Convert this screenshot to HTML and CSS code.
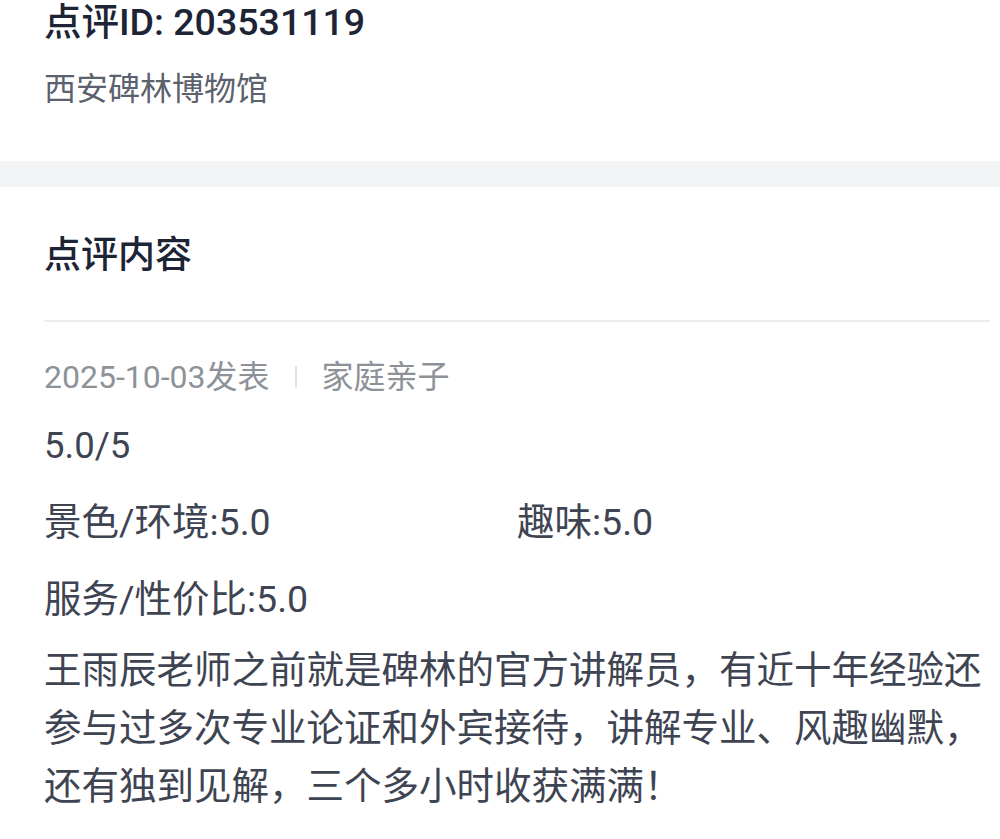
FILE: index.html
```html
<!DOCTYPE html>
<html lang="zh-CN">
<head>
<meta charset="utf-8">
<title>点评详情</title>
<link rel="stylesheet" href="styles.css">
</head>
<body>
<div class="page">
  <header class="head">
    <h1 class="review-id">点评ID: 203531119</h1>
    <div class="poi">西安碑林博物馆</div>
  </header>
  <div class="band"></div>
  <section class="content">
    <h2 class="section-title">点评内容</h2>
    <div class="divider"></div>
    <div class="meta"><span>2025-10-03发表</span><span class="sep"></span><span>家庭亲子</span></div>
    <div class="rating">5.0/5</div>
    <div class="scores">
      <div class="score">景色/环境:5.0</div>
      <div class="score">趣味:5.0</div>
      <div class="score">服务/性价比:5.0</div>
    </div>
    <p class="text">王雨辰老师之前就是碑林的官方讲解员，有近十年经验还参与过多次专业论证和外宾接待，讲解专业、风趣幽默，还有独到见解，三个多小时收获满满！</p>
  </section>
</div>
</body>
</html>
```
FILE: styles.css
```css
html, body {
  margin: 0;
  padding: 0;
  background: #ffffff;
}
body {
  font-family: Roboto, "Noto Sans CJK SC", sans-serif;
  width: 1000px;
  overflow: hidden;
}
.head {
  padding: 0 10px 50px 44px;
}
.review-id {
  margin: 0;
  font-size: 37.5px;
  line-height: 44px;
  font-weight: 500;
  color: #1d2435;
}
.poi {
  margin-top: 23px;
  font-size: 32px;
  line-height: 44px;
  color: #5b616d;
}
.band {
  height: 26px;
  background: #f3f4f6;
}
.content {
  padding: 47px 10px 0 44px;
}
.section-title {
  margin: 0;
  font-size: 37px;
  line-height: 44px;
  font-weight: 500;
  color: #1d2435;
}
.divider {
  margin-top: 42px;
  height: 2px;
  background: #ebecee;
}
.meta {
  margin-top: 33px;
  display: flex;
  align-items: center;
  font-size: 32px;
  line-height: 44px;
  color: #8d9299;
}
.sep {
  width: 2px;
  height: 22px;
  background: #dfe1e4;
  margin: 0 25px;
}
.rating {
  margin-top: 25px;
  font-size: 36.5px;
  line-height: 44px;
  color: #3e4452;
}
.scores {
  margin-top: 32px;
  display: grid;
  grid-template-columns: 1fr 1fr;
  row-gap: 33px;
}
.score {
  font-size: 37.5px;
  line-height: 44px;
  color: #3e4452;
}
.text {
  margin: 20px 0 0;
  font-size: 37.5px;
  line-height: 58px;
  color: #3e4452;
}
```
